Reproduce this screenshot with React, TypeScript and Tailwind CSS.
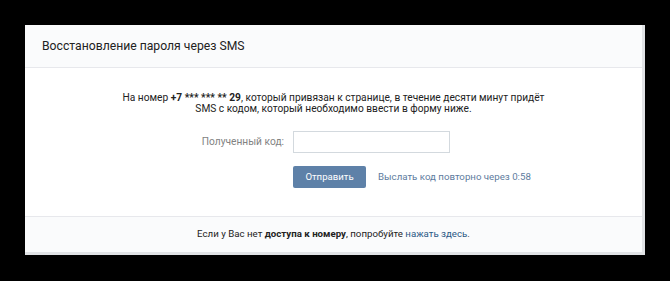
export default function App() {
  return (
    <div className="w-[670px] h-[281px] bg-black pt-[25px] pl-[25px] font-['Roboto',sans-serif]">
      <div className="w-[620px] bg-white border-r-[3px] border-b-[3px] border-[#e1e3e6] flex flex-col">
        {/* Header */}
        <div className="h-[43px] bg-[#fafbfc] border-b border-[#e7e8ec] flex items-center pl-[17px]">
          <span className="text-[12.2px] text-[#222]">Восстановление пароля через SMS</span>
        </div>

        {/* Body */}
        <div className="pt-[24px] pb-[28px] flex flex-col">
          <p className="text-[10.2px] leading-[11px] text-[#222] text-center">
            На номер <b>+7 *** *** ** 29</b>, который привязан к странице, в течение десяти минут придёт
            <br />
            SMS с кодом, который необходимо ввести в форму ниже.
          </p>

          <div className="flex items-center mt-[17px]">
            <label className="w-[259px] text-right text-[10.2px] text-[#828282]">Полученный код:</label>
            <input
              className="ml-[9px] w-[157px] h-[22px] border border-[#d3d9de] outline-none px-2 text-[10px]"
              type="text"
            />
          </div>

          <div className="flex items-center mt-[13px]">
            <div className="w-[259px]" />
            <button className="ml-[9px] w-[73px] h-[22px] bg-[#5e81a8] rounded-[2px] text-white text-[9.6px]">
              Отправить
            </button>
            <span className="ml-[12px] text-[9.7px] text-[#5d7b9e]">Выслать код повторно через 0:58</span>
          </div>
        </div>

        {/* Footer */}
        <div className="h-[36px] bg-[#fafbfc] border-t border-[#e7e8ec] flex items-center justify-center">
          <span className="text-[9.7px] text-[#222]">
            Если у Вас нет <b>доступа к номеру</b>, попробуйте{" "}
            <a className="text-[#2a5885]">нажать здесь</a>.
          </span>
        </div>
      </div>
    </div>
  );
}
